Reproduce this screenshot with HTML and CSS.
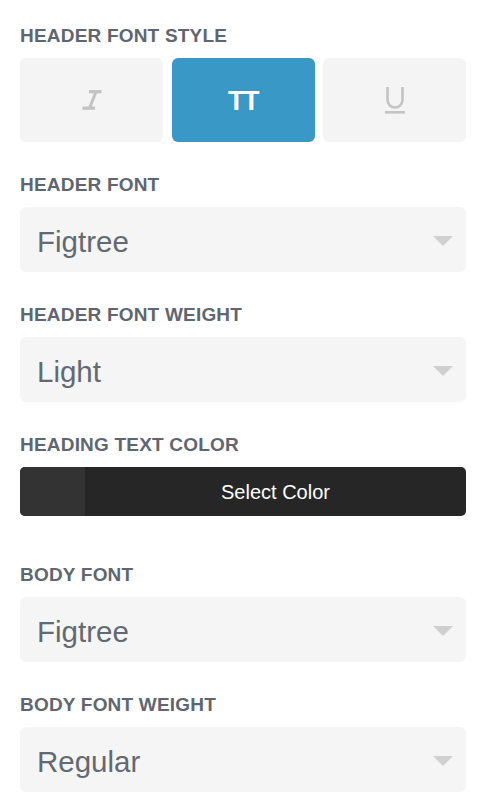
FILE: index.html
```html
<!DOCTYPE html>
<html>
<head>
<meta charset="utf-8">
<link rel="stylesheet" href="styles.css">
</head>
<body>
<div class="panel">
  <div class="group">
    <div class="label">HEADER FONT STYLE</div>
    <div class="styles">
      <div class="style-btn">
        <svg width="22" height="22" viewBox="0 0 22 22">
          <path d="M8 1 H20.5 V4.3 H8 Z" fill="#c3c3c3"/>
          <path d="M1.5 17.5 H14 V20.8 H1.5 Z" fill="#c3c3c3"/>
          <path d="M13.3 3 L16.5 3 L10.2 19 L7 19 Z" fill="#c3c3c3"/>
        </svg>
      </div>
      <div class="style-btn active"><span class="tt">TT</span></div>
      <div class="style-btn">
        <svg width="22" height="28" viewBox="0 0 22 28">
          <path d="M3.5 1 V14 a7.5 7.5 0 0 0 15 0 V1" fill="none" stroke="#c4c4c4" stroke-width="2.6"/>
          <rect x="1" y="25" width="20" height="2.6" fill="#c4c4c4"/>
        </svg>
      </div>
    </div>
  </div>
  <div class="group">
    <div class="label">HEADER FONT</div>
    <div class="select"><span class="value">Figtree</span><span class="caret"></span></div>
  </div>
  <div class="group">
    <div class="label">HEADER FONT WEIGHT</div>
    <div class="select"><span class="value">Light</span><span class="caret"></span></div>
  </div>
  <div class="group group-color">
    <div class="label">HEADING TEXT COLOR</div>
    <div class="color-btn"><span class="swatch"></span><span class="color-text">Select Color</span></div>
  </div>
  <div class="group">
    <div class="label">BODY FONT</div>
    <div class="select"><span class="value">Figtree</span><span class="caret"></span></div>
  </div>
  <div class="group">
    <div class="label">BODY FONT WEIGHT</div>
    <div class="select"><span class="value">Regular</span><span class="caret"></span></div>
  </div>
</div>
</body>
</html>
```

FILE: styles.css
```css
html, body {
  margin: 0;
  padding: 0;
  background: #ffffff;
}

body {
  font-family: "Liberation Sans", Arial, sans-serif;
}

.panel {
  width: 446px;
  padding: 25px 12px 0 20px;
}

.group {
  margin-bottom: 32px;
}

.group-color {
  margin-bottom: 48px;
}

.label {
  font-size: 19px;
  line-height: 22px;
  font-weight: bold;
  color: #5f6670;
  margin-bottom: 11px;
  letter-spacing: 0.2px;
}

.styles {
  display: grid;
  grid-template-columns: 143px 143px 143px;
  column-gap: 8.5px;
}

.style-btn {
  height: 84px;
  background: #f4f4f4;
  border-radius: 6px;
  display: flex;
  align-items: center;
  justify-content: center;
}

.style-btn.active {
  background: #3a98c6;
}

.tt {
  color: #ffffff;
  font-weight: bold;
  font-size: 27px;
  letter-spacing: -1.5px;
  line-height: 26px;
  padding-top: 1px;
}

.select {
  height: 65px;
  background: #f5f5f5;
  border-radius: 6px;
  display: flex;
  align-items: center;
  justify-content: space-between;
  padding: 4px 13px 0 17px;
  box-sizing: border-box;
}

.value {
  font-size: 29.5px;
  line-height: 34px;
  color: #626971;
}

.caret {
  width: 0;
  height: 0;
  border-left: 10px solid transparent;
  border-right: 10px solid transparent;
  border-top: 10px solid #cfcfcf;
  margin-top: -2px;
}

.color-btn {
  height: 49px;
  background: #262626;
  border-radius: 5px;
  display: flex;
  overflow: hidden;
}

.swatch {
  width: 65px;
  background: #333333;
}

.color-text {
  flex: 1;
  display: flex;
  align-items: center;
  justify-content: center;
  color: #ffffff;
  font-size: 20px;
  padding-top: 1px;
}
```
